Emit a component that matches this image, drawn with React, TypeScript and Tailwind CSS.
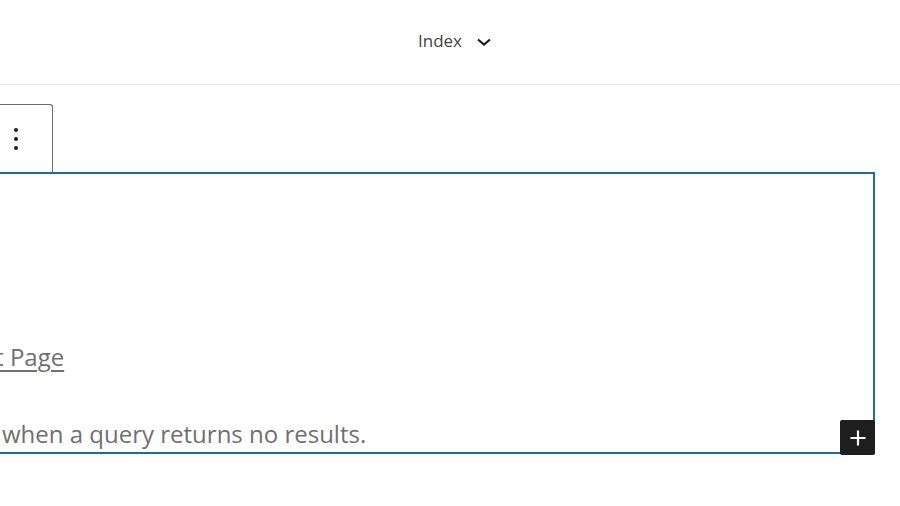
import React from "react";

export default function App() {
  return (
    <div className="w-[900px] h-[506px] overflow-hidden bg-white" style={{ fontFamily: '"Open Sans", "Noto Sans", sans-serif' }}>
      <header className="h-[85px] border-b border-[#e6e6e6] flex items-center justify-center pl-[10px]">
        <div className="flex items-center gap-[14px] text-[#444444]">
          <span className="text-[17px] leading-none -mt-[3px]">Index</span>
          <svg width="16" height="10" viewBox="0 0 16 10" className="-mt-[1px]">
            <polyline points="2,2.5 8,7.5 14,2.5" fill="none" stroke="#1e1e1e" strokeWidth="2.2" />
          </svg>
        </div>
      </header>
      <main className="pt-[19px]">
        <div className="w-[53px] h-[69px] border border-l-0 border-b-0 border-[#6b6b6b] rounded-tr-[3px] flex items-center pl-[14px]">
          <div className="flex flex-col gap-[5.5px]">
            <span className="block w-[3.5px] h-[3.5px] rounded-full bg-[#1e1e1e]" />
            <span className="block w-[3.5px] h-[3.5px] rounded-full bg-[#1e1e1e]" />
            <span className="block w-[3.5px] h-[3.5px] rounded-full bg-[#1e1e1e]" />
          </div>
        </div>
        <div className="relative w-[875px] h-[282px] border-2 border-l-0 border-[#18719c] -mt-px">
          <div className="flex flex-col text-[#707070]">
            <p className="mt-[165px] -ml-[49px] whitespace-nowrap text-[24px] leading-[36px] underline underline-offset-[4px] decoration-[1.5px]">Next Page</p>
            <p className="mt-[41px] ml-[2px] whitespace-nowrap text-[24px] leading-[36px]">when a query returns no results.</p>
          </div>
          <button className="absolute -right-[2px] -bottom-[3px] w-[35px] h-[35px] bg-[#1e1e1e] rounded-[2px] flex items-center justify-center">
            <svg width="20" height="20" viewBox="0 0 20 20">
              <path d="M10 2.5v15M2.5 10h15" stroke="#fff" strokeWidth="2.2" />
            </svg>
          </button>
        </div>
      </main>
    </div>
  );
}
